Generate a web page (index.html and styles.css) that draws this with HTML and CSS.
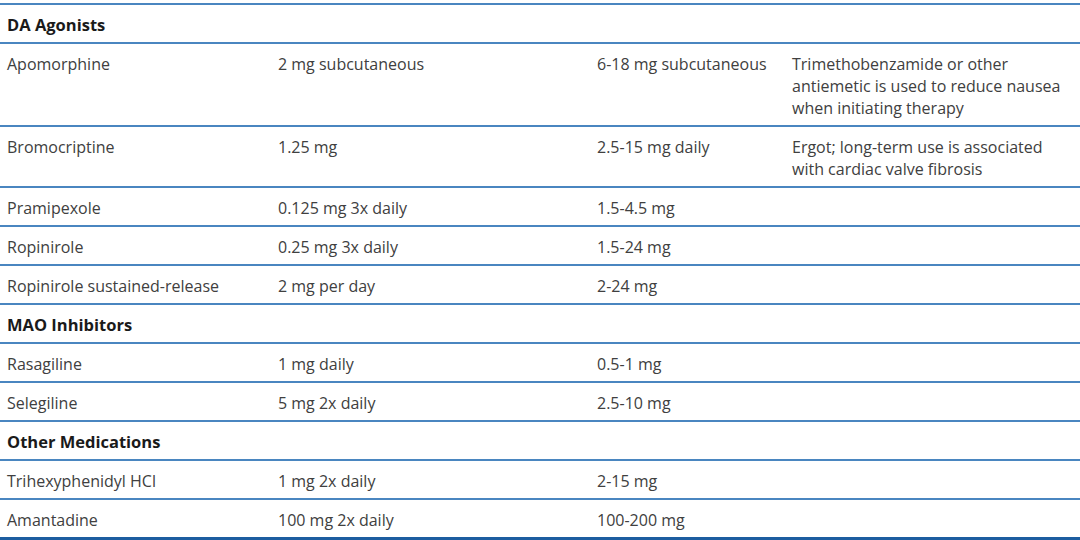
FILE: index.html
```html
<!DOCTYPE html>
<html>
<head>
<meta charset="utf-8">
<link rel="stylesheet" href="styles.css">
</head>
<body>
<table class="dose-table">
  <colgroup>
    <col class="c1"><col class="c2"><col class="c3"><col class="c4">
  </colgroup>
  <tbody>
    <tr class="group"><td colspan="4">DA Agonists</td></tr>
    <tr><td>Apomorphine</td><td>2 mg subcutaneous</td><td>6-18 mg subcutaneous</td><td>Trimethobenzamide or other antiemetic is used to reduce nausea when initiating therapy</td></tr>
    <tr><td>Bromocriptine</td><td>1.25 mg</td><td>2.5-15 mg daily</td><td>Ergot; long-term use is associated with cardiac valve fibrosis</td></tr>
    <tr><td>Pramipexole</td><td>0.125 mg 3x daily</td><td>1.5-4.5 mg</td><td></td></tr>
    <tr><td>Ropinirole</td><td>0.25 mg 3x daily</td><td>1.5-24 mg</td><td></td></tr>
    <tr><td>Ropinirole sustained-release</td><td>2 mg per day</td><td>2-24 mg</td><td></td></tr>
    <tr class="group"><td colspan="4">MAO Inhibitors</td></tr>
    <tr><td>Rasagiline</td><td>1 mg daily</td><td>0.5-1 mg</td><td></td></tr>
    <tr><td>Selegiline</td><td>5 mg 2x daily</td><td>2.5-10 mg</td><td></td></tr>
    <tr class="group"><td colspan="4">Other Medications</td></tr>
    <tr><td>Trihexyphenidyl HCl</td><td>1 mg 2x daily</td><td>2-15 mg</td><td></td></tr>
    <tr class="last"><td>Amantadine</td><td>100 mg 2x daily</td><td>100-200 mg</td><td></td></tr>
  </tbody>
</table>
</body>
</html>
```
FILE: styles.css
```css
html, body {
  margin: 0;
  padding: 0;
  background: #ffffff;
}
body {
  padding-top: 3px;
  font-family: "Open Sans", "Noto Sans", sans-serif;
  font-size: 16px;
  color: #404040;
}
.dose-table {
  width: 1080px;
  border-collapse: collapse;
  table-layout: fixed;
  border-top: 2px solid #4a86c0;
}
.c1 { width: 271px; }
.c2 { width: 319px; }
.c3 { width: 195px; }
.c4 { width: 295px; }
.dose-table td {
  padding: 9px 12px 6px 7px;
  line-height: 22px;
  vertical-align: top;
  border-bottom: 2px solid #4a86c0;
}
.dose-table .group td {
  font-weight: 700;
  font-size: 16.5px;
  color: #1a1a1a;
}
.dose-table .last td {
  border-bottom: 3px solid #1d5da0;
}
```
